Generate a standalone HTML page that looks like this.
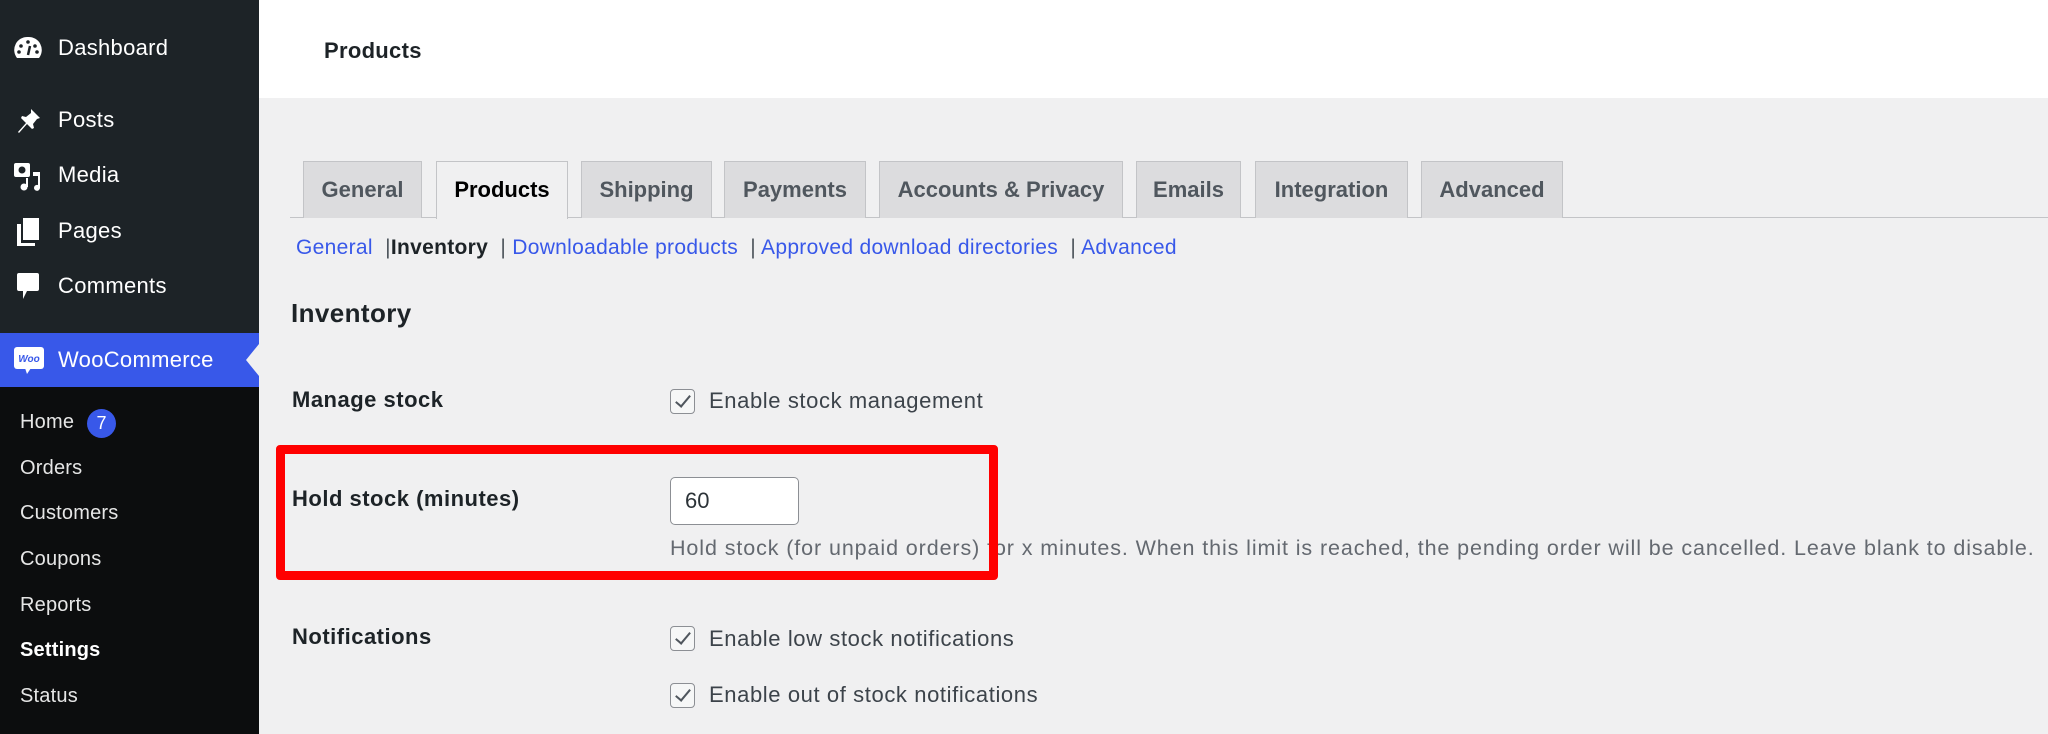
<!DOCTYPE html>
<html><head><style>
*{margin:0;padding:0;box-sizing:border-box}
body{width:2048px;height:734px;overflow:hidden;background:#f0f0f1;font-family:"Liberation Sans",sans-serif;position:relative}
.a{position:absolute;white-space:nowrap}
#side{position:absolute;left:0;top:0;width:259px;height:734px;background:#1d2327}
#sub{position:absolute;left:0;top:387px;width:259px;height:347px;background:#0c0d0e}
#woo{position:absolute;left:0;top:333px;width:259px;height:54px;background:#3858e9}
.m{color:#fff;font-size:22px;line-height:22px;left:58px;letter-spacing:0.3px}
.s{color:#e6e6e6;font-size:20px;line-height:20px;left:20px;letter-spacing:0.2px}
#head{position:absolute;left:259px;top:0;width:1789px;height:98px;background:#fff}
.tab{position:absolute;top:161px;height:57px;background:#dcdcde;border:1px solid #c3c4c7;border-bottom:none;color:#50575e;font-size:22px;font-weight:bold;text-align:center;line-height:56px}
.lnk{color:#3858e9}
.lab{font-size:22px;font-weight:bold;color:#1d2327;line-height:22px;left:292px;letter-spacing:0.5px}
.cb{position:absolute;left:670px;width:25px;height:25px;border:1.5px solid #8c8f94;border-radius:4px;background:#f6f7f7}
.cb:after{content:"";position:absolute;left:8px;top:2px;width:6px;height:13px;border:solid #50575e;border-width:0 2.5px 2.5px 0;transform:rotate(40deg)}
.ct{left:709px;font-size:22px;color:#3c434a;line-height:22px;letter-spacing:0.6px}
</style></head><body>
<div id="side"></div><div id="woo"></div><div id="sub"></div>
<svg class="a" style="left:14px;top:36px" width="28" height="26" viewBox="0 0 28 26"><path d="M14 1A13 13 0 0 0 3 22h22A13 13 0 0 0 14 1z" fill="#fff"/><circle cx="14" cy="6" r="1.8" fill="#1d2327"/><circle cx="7" cy="10" r="1.8" fill="#1d2327"/><circle cx="21" cy="10" r="1.8" fill="#1d2327"/><circle cx="5" cy="16" r="1.8" fill="#1d2327"/><circle cx="23" cy="16" r="1.8" fill="#1d2327"/><path d="M14 19l2-9" stroke="#1d2327" stroke-width="2.5"/></svg>
<div class="a m" style="top:37px">Dashboard</div>
<svg class="a" style="left:14px;top:107px" width="28" height="28" viewBox="0 0 28 28"><path d="M17 2l9 9-3 1-4 5 1 4-2 1-5-5-8 9-1-1 8-9-5-5 1-2 4 1 5-4z" fill="#fff"/></svg>
<div class="a m" style="top:109px">Posts</div>
<svg class="a" style="left:13px;top:160px" width="30" height="32" viewBox="0 0 30 32"><rect x="1" y="3" width="16" height="14" rx="2" fill="#fff"/><circle cx="9" cy="10" r="3.5" fill="#1d2327"/><path d="M20 12h7v16a3 3 0 1 1-2-3V16h-5z" fill="#fff"/><circle cx="11" cy="27" r="3.5" fill="#fff"/><path d="M13 27V18h2v9z" fill="#fff"/></svg>
<div class="a m" style="top:164px">Media</div>
<svg class="a" style="left:15px;top:217px" width="26" height="30" viewBox="0 0 26 30"><path d="M8 1h16v22H8z" fill="#fff"/><path d="M2 7h4v19h14v3H2z" fill="#fff"/></svg>
<div class="a m" style="top:220px">Pages</div>
<svg class="a" style="left:16px;top:272px" width="24" height="30" viewBox="0 0 24 30"><path d="M3 1h18a2 2 0 0 1 2 2v14a2 2 0 0 1-2 2H11l-4 8v-8H3a2 2 0 0 1-2-2V3a2 2 0 0 1 2-2z" fill="#fff"/></svg>
<div class="a m" style="top:275px">Comments</div>
<svg class="a" style="left:13px;top:346px" width="32" height="30" viewBox="0 0 32 30"><rect x="1" y="1" width="30" height="22" rx="3" fill="#fff"/><path d="M12 22l2 6 4-6z" fill="#fff"/><text x="16" y="16" font-size="10" font-style="italic" font-weight="bold" fill="#3858e9" text-anchor="middle" font-family="Liberation Sans">Woo</text></svg>
<div class="a m" style="top:349px">WooCommerce</div>
<svg class="a" style="left:246px;top:344px" width="13" height="32"><path d="M13 0L0 16 13 32z" fill="#f0f0f1"/></svg>
<div class="a s" style="top:412px">Home</div>
<div class="a" style="left:87px;top:409px;width:29px;height:29px;border-radius:50%;background:#3858e9;color:#fff;font-size:18px;text-align:center;line-height:29px">7</div>
<div class="a s" style="top:458px">Orders</div>
<div class="a s" style="top:503px">Customers</div>
<div class="a s" style="top:549px">Coupons</div>
<div class="a s" style="top:595px">Reports</div>
<div class="a s" style="top:640px;color:#fff;font-weight:bold">Settings</div>
<div class="a s" style="top:686px">Status</div>
<div id="head"></div>
<div class="a" style="left:324px;top:38px;font-size:22px;font-weight:bold;color:#1d2327;letter-spacing:0.3px">Products</div>
<div class="a" style="left:290px;top:217px;width:1758px;height:1px;background:#c3c4c7"></div>
<div class="tab" style="left:303px;width:119px">General</div>
<div class="tab" style="left:436px;width:132px;height:58px;background:#f0f0f1;color:#000">Products</div>
<div class="tab" style="left:581px;width:131px">Shipping</div>
<div class="tab" style="left:724px;width:142px">Payments</div>
<div class="tab" style="left:879px;width:244px">Accounts &amp; Privacy</div>
<div class="tab" style="left:1136px;width:105px">Emails</div>
<div class="tab" style="left:1255px;width:153px">Integration</div>
<div class="tab" style="left:1421px;width:142px">Advanced</div>
<div class="a" style="left:296px;top:236px;font-size:21px;color:#50575e;letter-spacing:0.3px"><span class="lnk">General</span> &nbsp;|<b style="color:#1d2327">Inventory</b> &nbsp;| <span class="lnk">Downloadable products</span> &nbsp;| <span class="lnk">Approved download directories</span> &nbsp;| <span class="lnk">Advanced</span></div>
<div class="a" style="left:291px;top:298px;font-size:26px;font-weight:bold;color:#1d2327;letter-spacing:0.4px">Inventory</div>
<div class="a lab" style="top:389px">Manage stock</div>
<div class="cb" style="top:389px"></div><div class="a ct" style="top:390px">Enable stock management</div>
<div class="a lab" style="top:488px">Hold stock (minutes)</div>
<div class="a" style="left:670px;top:477px;width:129px;height:48px;background:#fff;border:1.5px solid #8c8f94;border-radius:5px;font-size:22px;line-height:45px;padding-left:14px;color:#2c3338">60</div>
<div class="a" style="left:670px;top:536px;font-size:21.5px;color:#646970;letter-spacing:0.9px">Hold stock (for unpaid orders) for x minutes. When this limit is reached, the pending order will be cancelled. Leave blank to disable.</div>
<div class="a" style="left:276px;top:445px;width:722px;height:135px;border:9px solid #ff0000;border-radius:4px"></div>
<div class="a lab" style="top:626px">Notifications</div>
<div class="cb" style="top:626px"></div><div class="a ct" style="top:628px">Enable low stock notifications</div>
<div class="cb" style="top:683px"></div><div class="a ct" style="top:684px">Enable out of stock notifications</div>
</body></html>
